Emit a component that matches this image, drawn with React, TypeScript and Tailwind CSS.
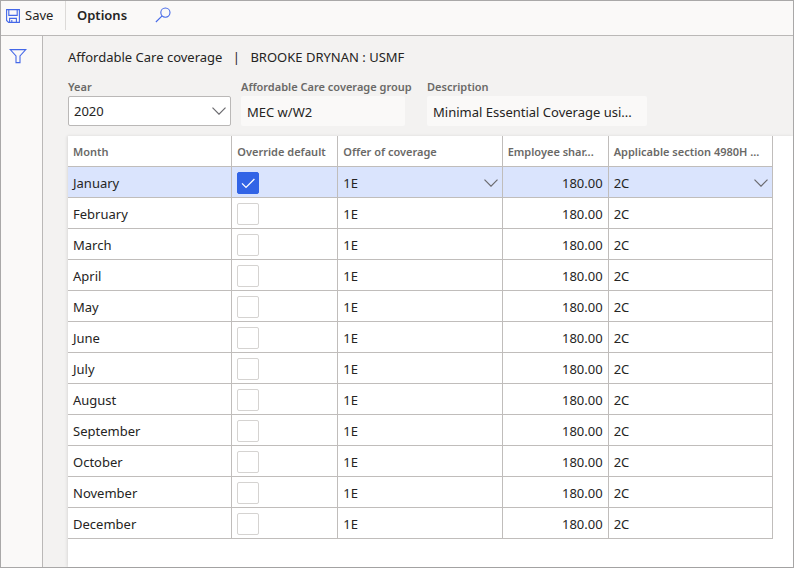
import { useState } from "react";

const months = [
  "January", "February", "March", "April", "May", "June",
  "July", "August", "September", "October", "November", "December",
];

const headings = [
  "Month", "Override default", "Offer of coverage", "Employee shar...", "Applicable section 4980H ...",
];

function Chevron({ className }: { className: string }) {
  return (
    <svg viewBox="0 0 14 8" className={`pointer-events-none absolute h-2 w-3.5 ${className}`} fill="none" stroke="#6b6a6f" strokeWidth="1.2" aria-hidden="true">
      <path d="M0.5 0.7 L7 7.2 L13.5 0.7" />
    </svg>
  );
}

function SaveIcon() {
  return (
    <svg viewBox="0 0 14 14" className="h-3.5 w-3.5" fill="none" stroke="#4468e8" strokeWidth="1.1" aria-hidden="true">
      <path d="M0.6 0.6 H13.4 V13.4 H2.6 L0.6 11.4 Z" />
      <path d="M2.8 0.6 V6.4 H11.2 V0.6" />
      <path d="M3.6 13.4 V9.4 H10.4 V13.4 M5.8 11 V13.4" />
    </svg>
  );
}

function SearchIcon() {
  return (
    <svg viewBox="0 0 16 16" className="h-4 w-4" fill="none" stroke="#4468e8" strokeWidth="1.1" aria-hidden="true">
      <circle cx="10.4" cy="5.6" r="4.6" />
      <path d="M7.1 8.9 L0.9 15" />
    </svg>
  );
}

function FilterIcon() {
  return (
    <svg viewBox="0 0 18 16" className="h-4 w-[18px]" fill="none" stroke="#4468e8" strokeWidth="1.1" aria-hidden="true">
      <path d="M1.2 1.6 H16.8 L11 7.9 V14.6 H7 V7.9 Z" />
    </svg>
  );
}

function CellSelect({ value, label }: { value: string; label: string }) {
  return (
    <div className="relative">
      <select aria-label={label} defaultValue={value} className="block h-[26px] w-full appearance-none bg-transparent px-[5px] outline-none">
        <option>{value}</option>
      </select>
      <Chevron className="top-2 right-1" />
    </div>
  );
}

function ReadOnlyField({ id, label, value, width }: { id: string; label: string; value: string; width: string }) {
  return (
    <div className="flex flex-col">
      <label htmlFor={id} className="text-[11px] leading-[18px] font-semibold whitespace-nowrap text-[#6a6967]">{label}</label>
      <input id={id} readOnly value={value} className={`h-[30px] rounded-xs bg-[#faf9f8] px-1.5 pt-0.5 outline-none ${width}`} />
    </div>
  );
}

export default function App() {
  const [checked, setChecked] = useState<string[]>(["January"]);
  const toggle = (m: string) =>
    setChecked((c) => (c.includes(m) ? c.filter((x) => x !== m) : [...c, m]));

  return (
    <div className="flex min-h-screen flex-col border border-[#a9a8a8] bg-[#faf9f8] font-['Noto_Sans','Open_Sans',sans-serif] text-[13px] text-[#252423]">
      <header className="flex h-[35px] items-start border-b border-[#bab8b7]">
        <button className="flex h-[29px] w-[65px] items-center gap-[5px] border-r border-[#dcdad8] pl-[5px]">
          <SaveIcon />
          Save
        </button>
        <button className="h-[30px] pl-[11px] font-semibold">Options</button>
        <button aria-label="Search" className="ml-7 h-[27px]"><SearchIcon /></button>
      </header>
      <div className="flex flex-1">
        <aside className="w-[42px] shrink-0 border-r border-[#bab8b7] pt-3 pl-2">
          <button aria-label="Show filters" className="block"><FilterIcon /></button>
        </aside>
        <main className="flex min-w-0 flex-1 flex-col bg-[#f3f2f1] pl-[25px]">
          <h1 className="flex pt-3 leading-[18px]">
            <span>Affordable Care coverage</span>
            <span className="w-7 text-center">|</span>
            <span>BROOKE DRYNAN : USMF</span>
          </h1>
          <div className="flex pt-3 pb-[10px]">
            <div className="mr-[10px] flex flex-col">
              <label htmlFor="year" className="text-[11px] leading-[18px] font-semibold text-[#6a6967]">Year</label>
              <div className="relative">
                <select id="year" className="block h-[30px] w-[163px] appearance-none rounded-xs border border-[#bab8b7] bg-white px-[5px] pt-0.5 outline-none">
                  <option>2020</option>
                </select>
                <Chevron className="top-[11px] right-[5px]" />
              </div>
            </div>
            <div className="w-[186px]">
              <ReadOnlyField id="group" label="Affordable Care coverage group" value="MEC w/W2" width="w-[164px]" />
            </div>
            <ReadOnlyField id="description" label="Description" value="Minimal Essential Coverage usi..." width="w-[220px]" />
          </div>
          <section className="flex-1 bg-white pr-5 shadow-[-1px_0_3px_rgba(0,0,0,0.1)]">
            <table className="w-full table-fixed border-separate border-spacing-0">
              <colgroup>
                <col />
                <col className="w-[106px]" />
                <col />
                <col className="w-[106px]" />
                <col />
              </colgroup>
              <thead>
                <tr className="text-left text-[11px] text-[#6a6967]">
                  {headings.map((h) => (
                    <th key={h} scope="col" className="h-[31px] border-r border-b border-[#c0bdbb] px-[5px] pt-0.5 pb-0 font-semibold whitespace-nowrap">{h}</th>
                  ))}
                </tr>
              </thead>
              <tbody>
                {months.map((m, i) => (
                  <tr key={m} className={i === 0 ? "bg-[#dae4fd]" : "bg-white"}>
                    <td className="h-[31px] border-r border-b border-[#c0bdbb] px-[5px] pt-1 pb-0">{m}</td>
                    <td className="border-r border-b border-[#c0bdbb] px-[5px] pt-0.5 pb-0">
                      <span className="relative block h-[22px] w-[22px]">
                        <input
                          type="checkbox"
                          aria-label={`Override default, ${m}`}
                          checked={checked.includes(m)}
                          onChange={() => toggle(m)}
                          className="block h-[22px] w-[22px] appearance-none rounded-xs border border-[#d5d3d1] bg-white checked:border-[#3264e6] checked:bg-[#3264e6]"
                        />
                        {checked.includes(m) && (
                          <svg viewBox="0 0 22 22" className="pointer-events-none absolute inset-0" fill="none" stroke="white" strokeWidth="1.3" aria-hidden="true">
                            <path d="M5 11.4 L9 15.4 L17.4 7" />
                          </svg>
                        )}
                      </span>
                    </td>
                    <td className="border-r border-b border-[#c0bdbb] pt-1 pb-0">
                      {i === 0 ? <CellSelect value="1E" label="Offer of coverage, January" /> : <span className="px-[5px]">1E</span>}
                    </td>
                    <td className="border-r border-b border-[#c0bdbb] px-[5px] pt-1 pb-0 text-right">180.00</td>
                    <td className="border-r border-b border-[#c0bdbb] pt-1 pb-0">
                      {i === 0 ? <CellSelect value="2C" label="Applicable section 4980H, January" /> : <span className="px-[5px]">2C</span>}
                    </td>
                  </tr>
                ))}
              </tbody>
            </table>
          </section>
        </main>
      </div>
    </div>
  );
}
